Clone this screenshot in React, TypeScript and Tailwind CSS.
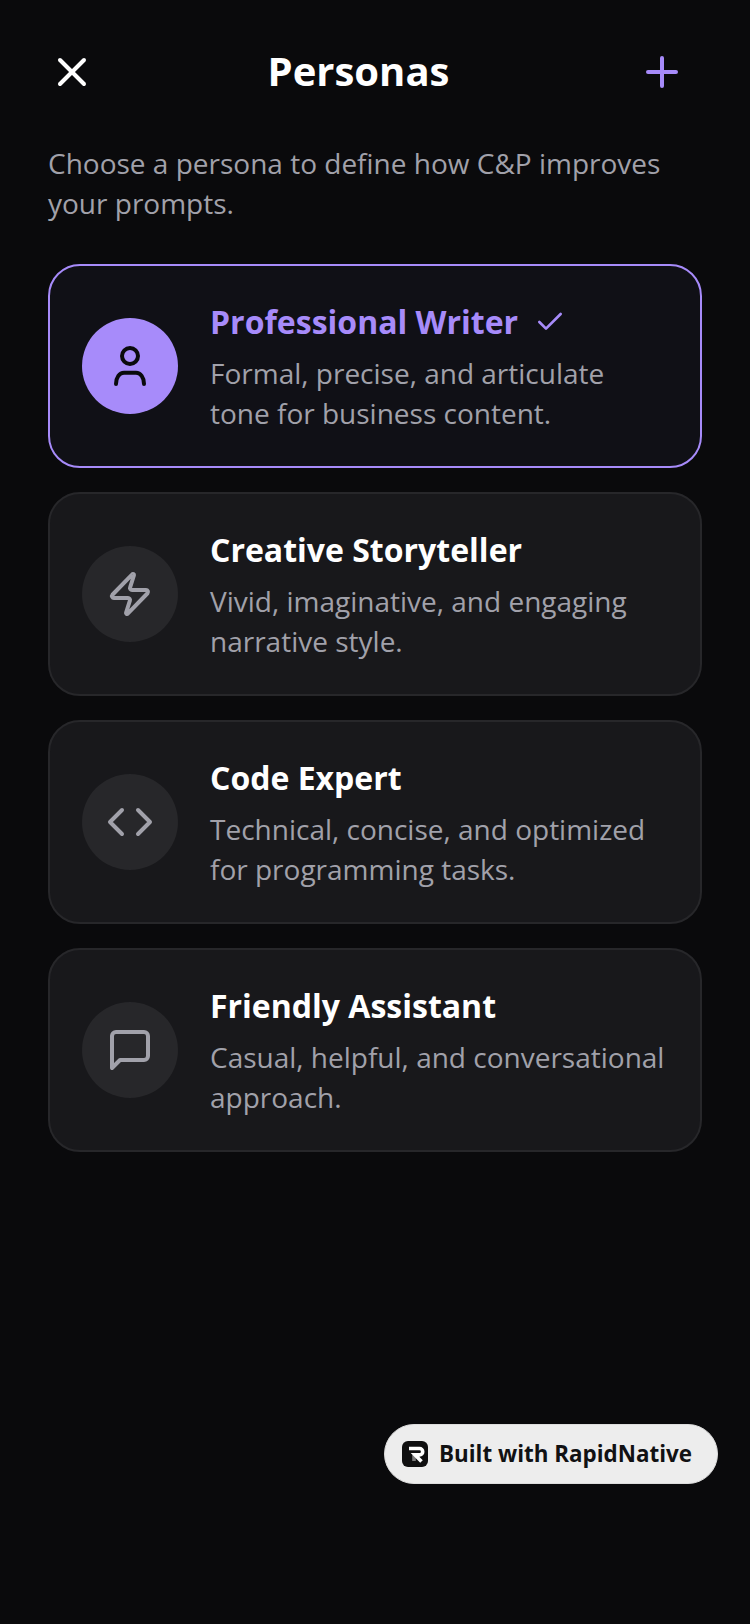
import { Check, Code, Plus, X, Zap } from 'lucide-react';
import type { ReactNode } from 'react';

interface Persona {
  title: string;
  description: string;
  icon: ReactNode;
  selected?: boolean;
}

function UserIcon() {
  return (
    <svg
      className="w-10 h-10"
      fill="none"
      stroke="currentColor"
      viewBox="0 0 40 40"
      strokeLinecap="round"
      strokeLinejoin="round"
      strokeWidth={4}
    >
      <circle cx="20" cy="10" r="8" />
      <path d="M6 38c0-6.5 3.5-11.3 8-11.3h12c4.500 0 8 4.800 8 11.300" />
    </svg>
  );
}

function MessageIcon() {
  return (
    <svg
      className="w-12 h-12"
      fill="none"
      stroke="currentColor"
      viewBox="0 0 24 24"
      strokeLinecap="round"
      strokeLinejoin="round"
      strokeWidth={2}
    >
      <path d="M21 15a2 2 0 0 1-2 2H7l-4 4V5a2 2 0 0 1 2-2h14a2 2 0 0 1 2 2z" />
    </svg>
  );
}

function RapidLogo() {
  return (
    <div className="w-[26px] h-[26px] rounded-[6px] bg-[#0f0f10] flex items-center justify-center">
      <svg className="w-[26px] h-[26px]" viewBox="0 0 26 26" fill="none" strokeWidth={3.6}>
        <path d="M12 14v6" stroke="#ffffff" strokeOpacity={0.45} />
        <path d="M7 7.5h10.5a3.2 3.2 0 0 1 0 6.4H13l6.5 6.6" stroke="#ffffff" />
      </svg>
    </div>
  );
}

const personas: Persona[] = [
  {
    title: 'Professional Writer',
    description: 'Formal, precise, and articulate tone for business content.',
    icon: <UserIcon />,
    selected: true,
  },
  {
    title: 'Creative Storyteller',
    description: 'Vivid, imaginative, and engaging narrative style.',
    icon: <Zap className="w-12 h-12" />,
  },
  {
    title: 'Code Expert',
    description: 'Technical, concise, and optimized for programming tasks.',
    icon: <Code className="w-12 h-12" />,
  },
  {
    title: 'Friendly Assistant',
    description: 'Casual, helpful, and conversational approach.',
    icon: <MessageIcon />,
  },
];

function PersonaCard({ persona }: { persona: Persona }) {
  const { selected } = persona;

  return (
    <div
      className={`flex items-center h-[204px] pl-[32px] pr-[32px] rounded-[32px] border-2 ${
        selected ? 'bg-[#101016] border-[#a78bfa]' : 'bg-[#18181b] border-[#27272a]'
      }`}
    >
      <div
        className={`w-24 h-24 shrink-0 rounded-full flex items-center justify-center ${
          selected ? 'bg-[#a78bfa] text-[#0a0a0c]' : 'bg-[#27272a] text-[#a1a1aa]'
        }`}
      >
        {persona.icon}
      </div>
      <div className="ml-8 min-w-0 flex-1">
        <div className="flex items-center mb-[8px]">
          <h3
            className={`text-[32px] leading-[46px] font-bold ${
              selected ? 'text-[#a78bfa]' : 'text-white'
            }`}
          >
            {persona.title}
          </h3>
          {selected && <Check className="w-8 h-8 ml-4 text-[#a78bfa]" />}
        </div>
        <p className="text-[28px] leading-[40px] text-[#a1a1aa]">{persona.description}</p>
      </div>
    </div>
  );
}

export default function App() {
  return (
    <div className="relative min-h-[1624px] bg-[#0a0a0c] font-['Open_Sans',sans-serif]">
      {/* Header */}
      <div className="flex items-center justify-between pt-12 pl-12 pr-[64px]">
        <X className="w-12 h-12 text-white" />
        <h1 className="mr-[17px] -mt-[2px] text-[40px] leading-[48px] font-bold text-white">Personas</h1>
        <Plus className="w-12 h-12 text-[#a78bfa]" />
      </div>

      <p className="mt-[47px] px-12 text-[28px] leading-[40px] text-[#a1a1aa]">
        Choose a persona to define how C&amp;P improves your prompts.
      </p>

      {/* Cards */}
      <div className="mt-[41px] px-12 flex flex-col gap-6">
        {personas.map((persona) => (
          <PersonaCard key={persona.title} persona={persona} />
        ))}
      </div>

      {/* Badge */}
      <div className="absolute left-[384px] top-[1424px] w-[334px] h-[60px] rounded-full bg-[#ededed] border border-[#dddddd] flex items-center pl-[17px]">
        <RapidLogo />
        <span className="ml-[11px] text-[22.4px] leading-[32px] font-bold text-[#111113]">
          Built with RapidNative
        </span>
      </div>
    </div>
  );
}
